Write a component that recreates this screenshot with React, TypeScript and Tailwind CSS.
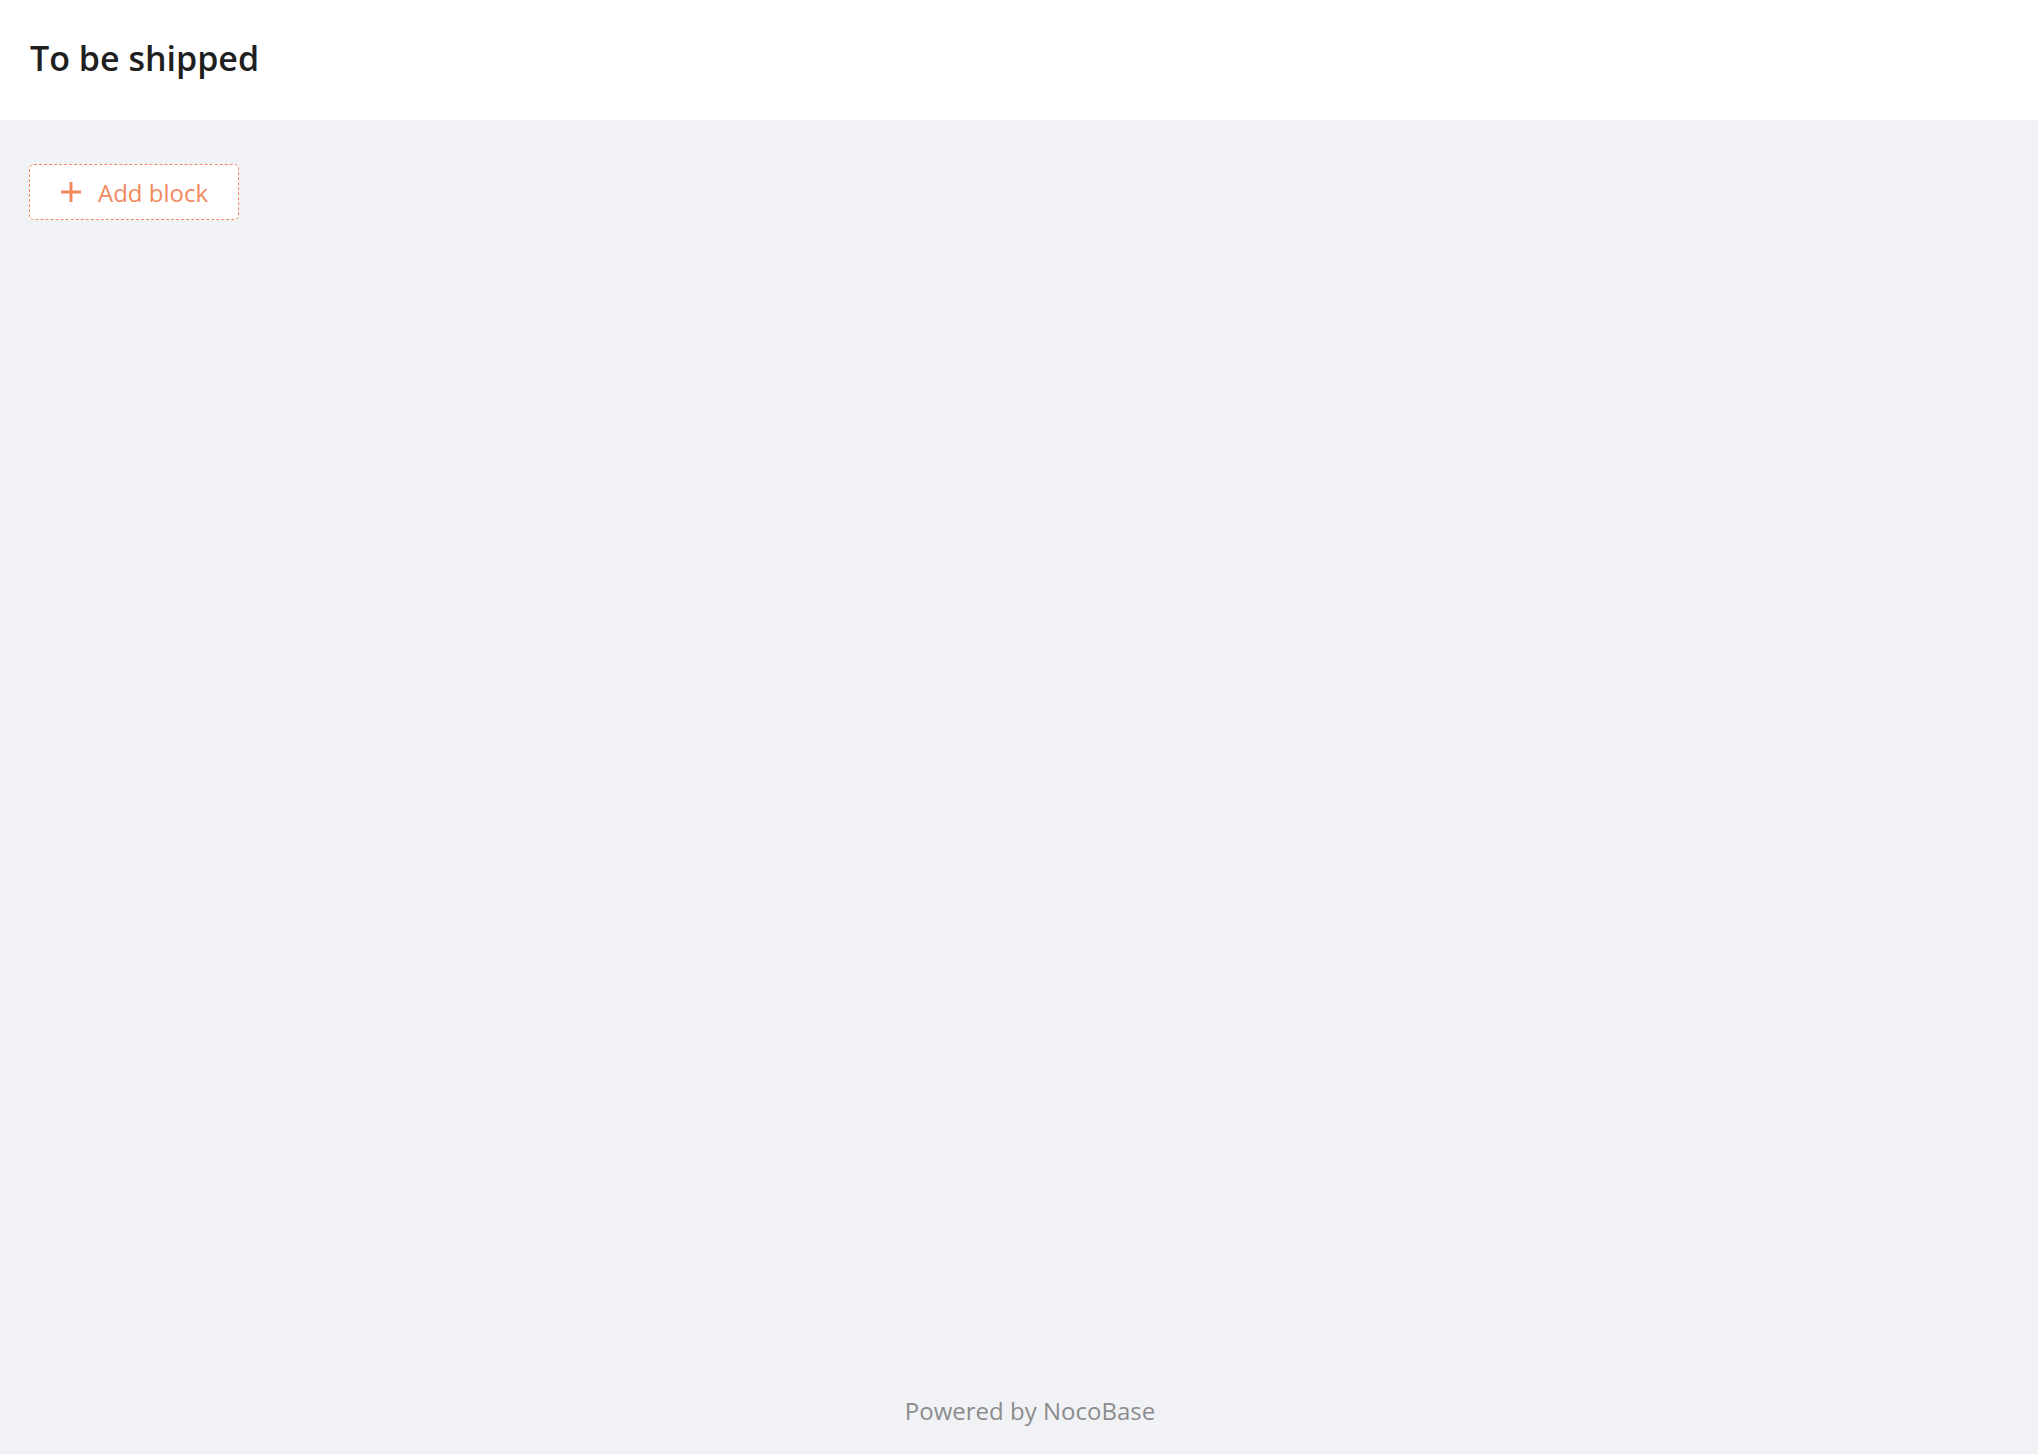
export default function App() {
  return (
    <div
      className="flex min-h-screen flex-col bg-[#f0f2f5]"
      style={{ fontFamily: '"Open Sans", "Noto Sans", sans-serif' }}
    >
      {/* Page header */}
      <header className="flex h-[120px] items-start bg-white pl-[30px] pt-[35px]">
        <h1 className="text-[34px] font-semibold leading-[46px] text-[#1f1f1f]">To be shipped</h1>
      </header>

      {/* Blocks area */}
      <main className="flex-1 px-[29px] pt-[44px]">
        <button className="flex h-[56px] w-[210px] items-center gap-[17px] rounded-[5px] border border-dashed border-[#f2895e] bg-white pl-[31px] pt-[2px] text-[24px] text-[#f2895e]">
          <svg width="20" height="20" viewBox="0 0 20 20" fill="none" className="-mt-[2px]">
            <path d="M10 0v20M0 10h20" stroke="#f2895e" strokeWidth="3" />
          </svg>
          <span className="leading-none">Add block</span>
        </button>
      </main>

      <footer className="flex h-[78px] items-start justify-center pl-[22px] pt-[17px] text-[24px] text-[#8c8c8c]">
        Powered by NocoBase
      </footer>
    </div>
  );
}
